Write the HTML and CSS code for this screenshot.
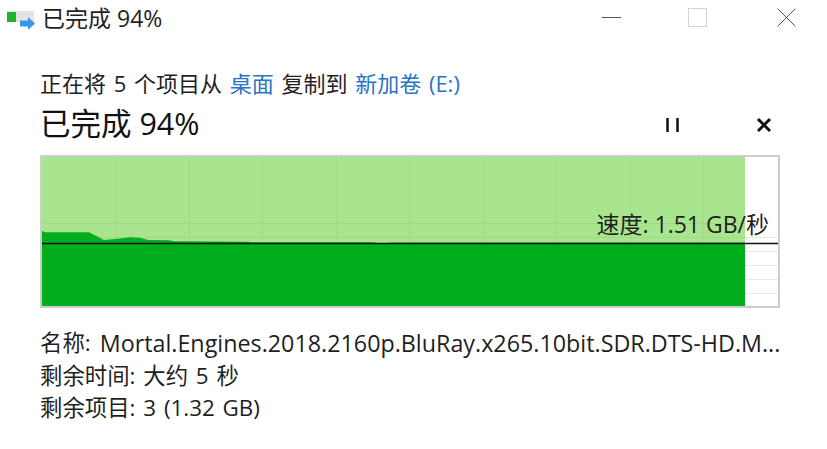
FILE: index.html
```html
<!DOCTYPE html>
<html lang="zh-CN">
<head>
<meta charset="utf-8">
<title>已完成 94%</title>
<link rel="stylesheet" href="styles.css">
</head>
<body>
<div class="window">
  <header class="titlebar">
    <svg class="app-icon" width="35" height="24" viewBox="0 0 35 24">
      <rect x="6" y="5" width="27" height="11" fill="#e4e4e4"/>
      <rect x="6" y="6" width="9" height="10" fill="#22b32c"/>
      <path d="M19 14.500h8v-3.500l7 6.500-7 6.500v-3.500h-8z" fill="#3a96e6"/>
    </svg>
    <span class="title-text">已完成 94%</span>
    <div class="window-controls">
      <svg class="wc wc-min" width="19" height="19" viewBox="0 0 19 19"><path d="M0 9.500h19" stroke="#555" stroke-width="1"/></svg>
      <svg class="wc wc-max" width="19" height="19" viewBox="0 0 19 19"><rect x="0.500" y="0.500" width="18" height="18" fill="none" stroke="#d4d4d4" stroke-width="1"/></svg>
      <svg class="wc wc-close" width="19" height="19" viewBox="0 0 19 19"><path d="M0.500 0.500l18 18M18.500 0.500l-18 18" stroke="#555" stroke-width="1" fill="none"/></svg>
    </div>
  </header>
  <main class="content">
    <p class="status">正在将 5 个项目从 <a class="link">桌面</a> 复制到 <a class="link">新加卷 (E:)</a></p>
    <div class="heading-row">
      <h1 class="heading">已完成 94%</h1>
      <div class="actions">
        <svg class="act act-pause" width="14" height="16" viewBox="0 0 14 16"><path d="M1.500 1v14M11.500 1v14" stroke="#111" stroke-width="2.500"/></svg>
        <svg class="act act-stop" width="16" height="16" viewBox="0 0 16 16"><path d="M2 2l12 12M14 2L2 14" stroke="#111" stroke-width="3"/></svg>
      </div>
    </div>
    <div class="chart">
      <svg class="chart-svg" width="736" height="149" viewBox="0 0 736 149">
        <rect width="703" height="149" fill="#a9e58e"/>
        <path d="M73.500 0V149M147.500 0V149M220.500 0V149M294.500 0V149M367.500 0V149M441.500 0V149M514.500 0V149M588.500 0V149M661.500 0V149" stroke="#9bdc84" stroke-width="1"/>
        <path d="M0 66.500H703M0 80.500H703" stroke="#9bdc84" stroke-width="1"/>
        <path d="M703 80.500H736M703 94.500H736M703 108.500H736M703 122.500H736M703 136.500H736" stroke="#e3ebe3" stroke-width="1"/>
        <path d="M0 73.700L3 75.300H47L62 83L75 81.700L88 80.300L98 80.700L106 83L128 83.300L131 84.300L205 84.700L210 85.300H330L340 86.500L350 85.500H703V149H0Z" fill="#00ad1c"/>
        <path d="M0 86.500H736" stroke="#111" stroke-width="1.300"/>
      </svg>
      <span class="speed">速度: 1.51 GB/秒</span>
    </div>
    <div class="details">
      <div class="detail-row name-row"><span>名称:</span><span class="file-name">Mortal.Engines.2018.2160p.BluRay.x265.10bit.SDR.DTS-HD.M...</span></div>
      <div class="detail-row">剩余时间: 大约 5 秒</div>
      <div class="detail-row">剩余项目: 3 (1.32 GB)</div>
    </div>
  </main>
</div>
</body>
</html>
```
FILE: styles.css
```css
* { box-sizing: border-box; }
html, body { margin: 0; padding: 0; background: #fff; }
body {
  width: 827px;
  height: 449px;
  overflow: hidden;
  font-family: "Open Sans", "Noto Sans CJK SC", sans-serif;
  color: #1f1f1f;
}
.titlebar {
  display: flex;
  align-items: center;
  height: 36px;
}
.app-icon { flex: none; margin-left: 1px; margin-right: 6px; }
.title-text { font-size: 23px; line-height: 36px; }
.window-controls {
  margin-left: auto;
  display: flex;
  align-items: center;
  padding-right: 31px;
  padding-bottom: 2px;
}
.wc { display: block; }
.wc-max { margin-left: 67px; }
.wc-close { margin-left: 70px; }
.content { padding: 29px 47px 0 40px; }
.status { margin: 0; font-size: 22px; line-height: 36px; word-spacing: 2px; white-space: nowrap; }
.link { color: #2a74c5; }
.heading-row { display: flex; align-items: center; height: 36px; margin-top: 4px; }
.heading { margin: 0; font-size: 30.5px; line-height: 36px; font-weight: 400; color: #111; }
.actions { margin-left: auto; display: flex; align-items: center; gap: 76px; padding-right: 8px; padding-top: 3px; }
.act { display: block; }
.chart {
  position: relative;
  width: 740px;
  height: 153px;
  margin-top: 14px;
  border: 2px solid #cdcdcd;
}
.chart-svg { display: block; }
.speed {
  position: absolute;
  right: 9px;
  top: 52px;
  font-size: 23px;
  line-height: 30px;
  white-space: nowrap;
}
.details { margin-top: 19px; width: 745px; font-size: 22.4px; line-height: 32.5px; word-spacing: 2px; }
.detail-row { white-space: nowrap; }
.name-row { display: flex; gap: 9px; word-spacing: 0; }
.file-name { font-size: 23.3px; line-height: 32.5px; }
```
